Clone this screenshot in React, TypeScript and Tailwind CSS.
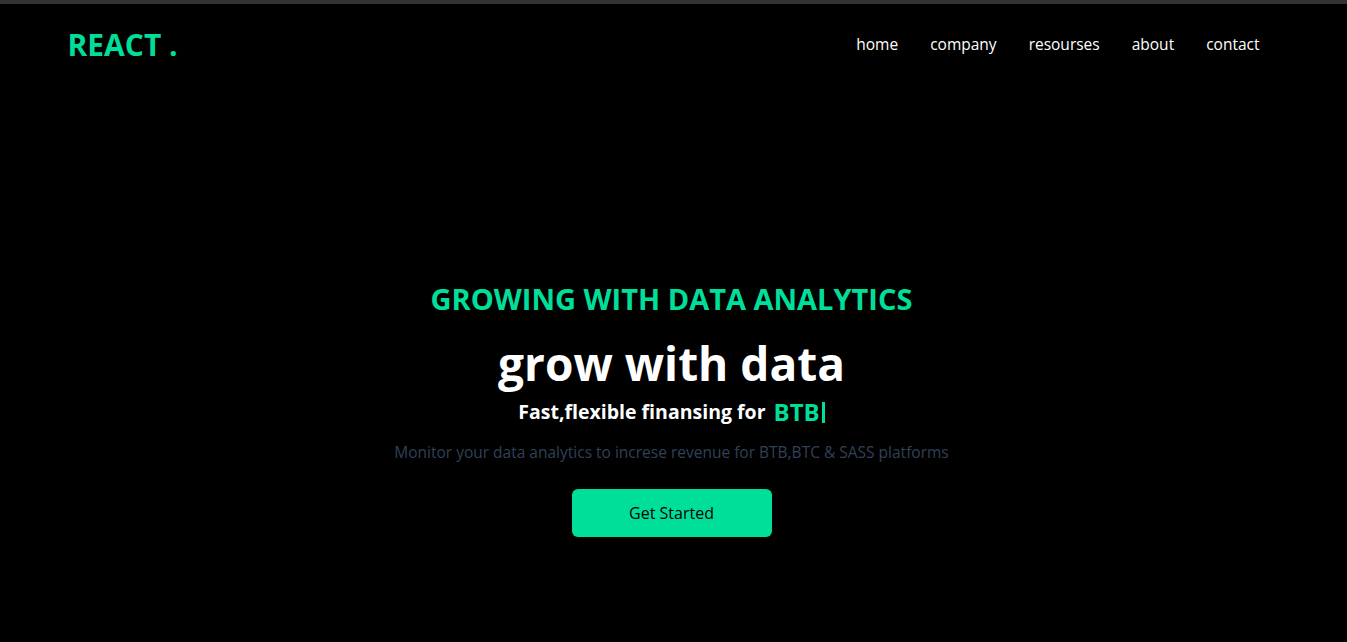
import React from "react"

const links = ["home", "company", "resourses", "about", "contact"]

function Navbar() {
  return (
    <nav className="mx-auto flex h-[82px] max-w-[1240px] items-center justify-between px-4 text-white">
      <h1 className="text-3xl font-bold text-[#00df9a]">REACT .</h1>
      <ul className="flex">
        {links.map((l) => (
          <li key={l} className="p-4 text-[15.5px]">
            {l}
          </li>
        ))}
      </ul>
    </nav>
  )
}

function Hero() {
  return (
    <section className="mx-auto flex h-[556px] w-full max-w-[800px] flex-col items-center pt-[195px] text-center text-white">
      <p className="text-[29px] leading-9 font-bold text-[#00df9a]">GROWING WITH DATA ANALYTICS</p>
      <h1 className="mt-[22px] text-[46px] leading-[48px] font-bold">grow with data</h1>
      <div className="mt-[9px] flex h-8 items-center justify-center">
        <p className="text-[19.5px] font-bold">Fast,flexible finansing for</p>
        <span className="pl-2 text-2xl font-bold text-[#00df9a]">BTB</span>
        <span className="ml-0.5 h-[21px] w-[3px] bg-[#00df9a]" />
      </div>
      <p className="mt-3 text-[15.5px] leading-6 text-slate-700">
        Monitor your data analytics to increse revenue for BTB,BTC &amp; SASS platforms
      </p>
      <button className="mt-[25px] h-12 w-[200px] rounded-md bg-[#00df9a] text-base font-medium text-black">
        Get Started
      </button>
    </section>
  )
}

export default function App() {
  return (
    <div className="min-h-screen bg-black pr-1 font-['Open_Sans',sans-serif]">
      <div className="-mr-1 h-1 bg-[#333333]" />
      <Navbar />
      <Hero />
    </div>
  )
}
